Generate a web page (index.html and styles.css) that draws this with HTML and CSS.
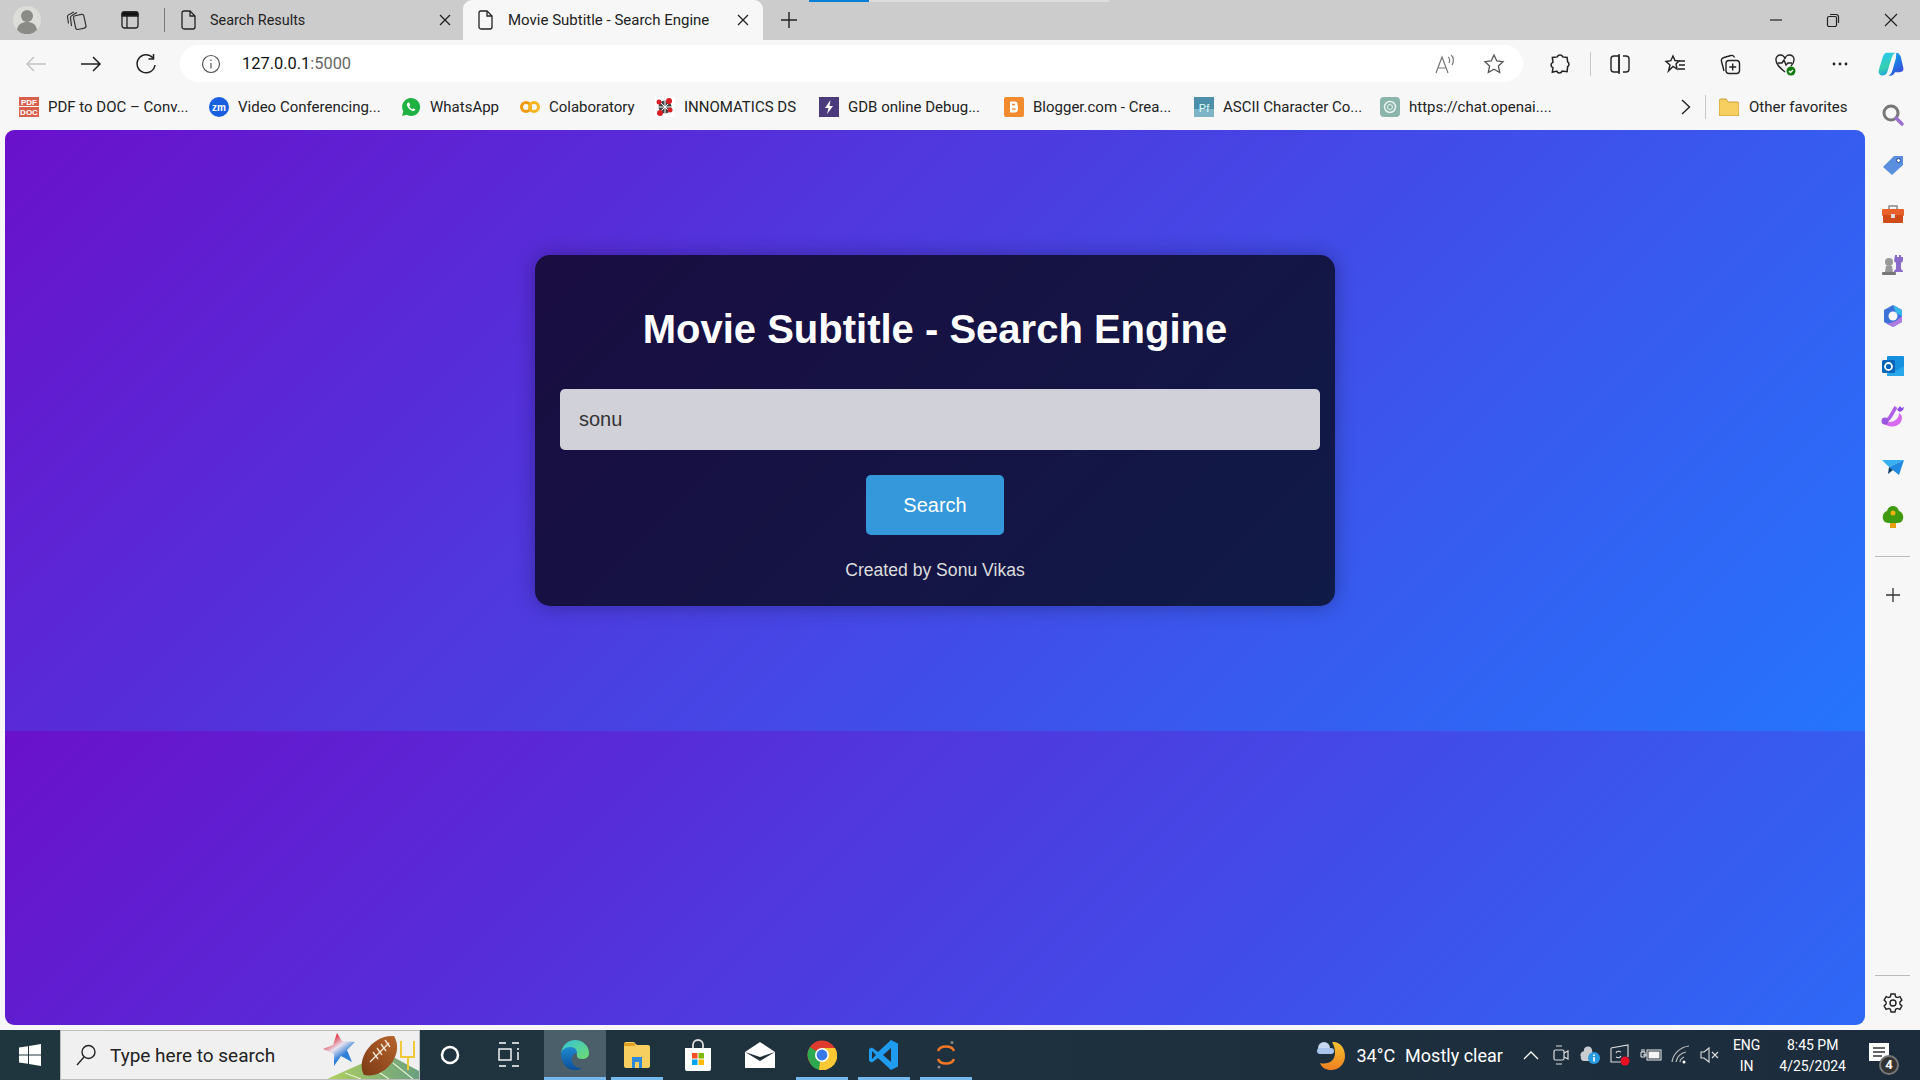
FILE: index.html
```html
<!DOCTYPE html>
<html lang="en">
<head>
    <meta charset="UTF-8">
    <meta name="viewport" content="width=device-width, initial-scale=1.0">
    <title>Movie Subtitle - Search Engine</title>
    <link rel="stylesheet" href="styles.css">
</head>
<body>
    <!-- Browser tab strip -->
    <div class="tab-strip">
        <div class="progress-line"><span></span></div>
        <div class="strip-btn profile">
            <svg width="28" height="28" viewBox="0 0 28 28"><circle cx="14" cy="14" r="14" fill="#dcdcd8"/><circle cx="14" cy="10" r="6" fill="#8a8a86"/><path d="M4 24c1-6 5-8 10-8s9 2 10 8a14 14 0 0 1-20 0z" fill="#8a8a86"/></svg>
        </div>
        <div class="strip-btn workspaces">
            <svg width="22" height="22" viewBox="0 0 22 22" fill="none" stroke="#333" stroke-width="1.200"><path d="M2.500 14.500L1.500 8c-.2-1 .3-1.800 1.200-2.200L8 3"/><path d="M5.500 17L4.500 9c-.2-1 .3-1.800 1.200-2.200L11 3.500"/><rect x="8.500" y="6" width="10.500" height="14" rx="2" transform="rotate(-12 13.500 13)"/></svg>
        </div>
        <div class="strip-btn vertical-tabs">
            <svg width="20" height="20" viewBox="0 0 20 20" fill="none" stroke="#222" stroke-width="1.300"><rect x="2" y="2" width="16" height="16" rx="2.500"/><path d="M2 3.500a1.500 1.500 0 0 1 1.500-1.500h13a1.500 1.500 0 0 1 1.500 1.500V6H2z" fill="#111"/><path d="M7 6v12"/></svg>
        </div>
        <div class="strip-sep"></div>
        <div class="tab">
            <svg class="doc-icon" width="17" height="20" viewBox="0 0 17 20" fill="none" stroke="#222" stroke-width="1.3"><path d="M2 3a2 2 0 0 1 2-2h6l5 5v11a2 2 0 0 1-2 2H4a2 2 0 0 1-2-2z"/><path d="M10 1v5h5"/></svg>
            <span class="tab-title">Search Results</span>
            <svg class="tab-close" width="12" height="12" viewBox="0 0 12 12" stroke="#222" stroke-width="1.300"><path d="M1 1l10 10M11 1L1 11"/></svg>
        </div>
        <div class="tab active">
            <svg class="doc-icon" width="17" height="20" viewBox="0 0 17 20" fill="none" stroke="#222" stroke-width="1.3"><path d="M2 3a2 2 0 0 1 2-2h6l5 5v11a2 2 0 0 1-2 2H4a2 2 0 0 1-2-2z"/><path d="M10 1v5h5"/></svg>
            <span class="tab-title">Movie Subtitle - Search Engine</span>
            <svg class="tab-close" width="12" height="12" viewBox="0 0 12 12" stroke="#222" stroke-width="1.300"><path d="M1 1l10 10M11 1L1 11"/></svg>
        </div>
        <div class="new-tab">
            <svg width="18" height="18" viewBox="0 0 18 18" stroke="#222" stroke-width="1.4"><path d="M9 1v16M1 9h16"/></svg>
        </div>
        <div class="window-controls">
            <svg width="12" height="12" viewBox="0 0 12 12" stroke="#222" stroke-width="1.2"><path d="M0 6h12"/></svg>
            <svg width="14" height="14" viewBox="0 0 14 14" fill="none" stroke="#222" stroke-width="1.2"><rect x="1.500" y="3.500" width="9" height="10" rx="1.500"/><path d="M4 1.500h6a2.500 2.500 0 0 1 2.500 2.500v6"/></svg>
            <svg width="14" height="14" viewBox="0 0 14 14" stroke="#222" stroke-width="1.2"><path d="M1 1l12 12M13 1L1 13"/></svg>
        </div>
    </div>

    <!-- Address bar row -->
    <div class="toolbar">
        <div class="nav-btn">
            <svg width="22" height="18" viewBox="0 0 22 18" fill="none" stroke="#c4c4c4" stroke-width="1.500"><path d="M21 9H2M9 2L2 9l7 7"/></svg>
        </div>
        <div class="nav-btn">
            <svg width="22" height="18" viewBox="0 0 22 18" fill="none" stroke="#222" stroke-width="1.500"><path d="M1 9h19M13 2l7 7-7 7"/></svg>
        </div>
        <div class="nav-btn">
            <svg width="22" height="22" viewBox="0 0 22 22" fill="none" stroke="#222" stroke-width="1.500"><path d="M18 5a9 9 0 1 0 2 7"/><path d="M18.500 1v5h-5"/></svg>
        </div>
        <div class="address-bar">
            <svg class="info-icon" width="20" height="20" viewBox="0 0 20 20" fill="none" stroke="#555" stroke-width="1.200"><circle cx="10" cy="10" r="8.500"/><path d="M10 9v5.500M10 5.500v1.500"/></svg>
            <span class="url">127.0.0.1<span class="url-port">:5000</span></span>
            <div class="address-actions">
                <svg width="24" height="24" viewBox="0 0 24 24" fill="none" stroke="#777" stroke-width="1.200"><path d="M3 21L9 5l6 16M5 16h8"/><path d="M15 5c2 1 2 4 1 6M18 3c3 2 3 7 1 10"/></svg>
                <svg width="24" height="24" viewBox="0 0 24 24" fill="none" stroke="#555" stroke-width="1.300"><path d="M12 3l2.800 6 6.200.7-4.600 4.300 1.300 6.500-5.700-3.200-5.700 3.200L7.600 14 3 9.700 9.200 9z"/></svg>
            </div>
        </div>
        <div class="toolbar-icons">
            <div class="tool-btn extensions">
                <svg width="24" height="24" viewBox="0 0 22 22" fill="none" stroke="#222" stroke-width="1.400"><path d="M8.500 4.500a2.700 2.700 0 0 1 5 0l4 .5.500 4a2.700 2.700 0 0 1 0 4.500l-.5 4.500-4.500-.5a2.700 2.700 0 0 1-5 0L4 18.500l.5-4a2.700 2.700 0 0 1 0-5L4 5z"/></svg>
            </div>
            <div class="toolbar-sep"></div>
            <div class="tool-btn">
                <svg width="22" height="22" viewBox="0 0 22 22" fill="none" stroke="#222" stroke-width="1.400"><path d="M10 3H5a3 3 0 0 0-3 3v10a3 3 0 0 0 3 3h5z"/><path d="M14 3h3a3 3 0 0 1 3 3v10a3 3 0 0 1-3 3h-3"/><path d="M10 1v20"/></svg>
            </div>
            <div class="tool-btn">
                <svg width="24" height="24" viewBox="0 0 24 24" fill="none" stroke="#222" stroke-width="1.400"><path d="M10 4l2 4.500 4 .5-3 3 1 5-4-2.500L5.500 19l1.500-6-4-3.500 4.800-.8z"/><path d="M16 9h6M16 13h6M15 17h7"/></svg>
            </div>
            <div class="tool-btn">
                <svg width="24" height="24" viewBox="0 0 24 24" fill="none" stroke="#222" stroke-width="1.400"><path d="M6 19L3.500 9.500C3 7.500 4 6 6 5.500L13 3.500c1.500-.4 3 .3 3.500 2"/><rect x="8" y="8.500" width="13.500" height="13" rx="3"/><path d="M14.700 11.500v7M11.200 15h7"/></svg>
            </div>
            <div class="tool-btn">
                <svg width="24" height="24" viewBox="0 0 24 24" fill="none" stroke="#222" stroke-width="1.400"><path d="M12 20C6 15 3 12 3 8a4.500 4.500 0 0 1 9-1 4.500 4.500 0 0 1 9 1c0 2-1 4-3 6"/><path d="M5 11h4l2-3 2 5 2-2h4"/><circle cx="18" cy="19" r="4.500" fill="#107c10" stroke="none"/><path d="M16 19l1.500 1.500L20 18" stroke="#fff"/></svg>
            </div>
            <div class="tool-btn">
                <svg width="16" height="4" viewBox="0 0 16 4" fill="#222"><circle cx="2" cy="2" r="1.400"/><circle cx="8" cy="2" r="1.400"/><circle cx="14" cy="2" r="1.400"/></svg>
            </div>
            <div class="tool-btn copilot">
                <svg width="26" height="28" viewBox="0 0 32 32"><defs><linearGradient id="cp1" x1="0" y1="0" x2="0.600" y2="1"><stop offset="0" stop-color="#1fb6ea"/><stop offset="0.500" stop-color="#1a7fe8"/><stop offset="1" stop-color="#3a4fd8"/></linearGradient><linearGradient id="cp2" x1="0.300" y1="0" x2="0.600" y2="1"><stop offset="0" stop-color="#27c8f0"/><stop offset="0.600" stop-color="#35d0b0"/><stop offset="1" stop-color="#1f9ae8"/></linearGradient></defs><path d="M11 2h11c-3 1-4 3-5 6l-5 16c-1 4-3 6-6 6H5c-3 0-5-3-4-7l5-16c1-3 3-5 5-5z" fill="url(#cp2)"/><path d="M22 2c3 0 5 2 6 5l3 13c1 4-1 6-5 6h-5c-2 4-5 5-8 4 3-1 4-4 5-7l4-14c0-3 1-5 0-7z" fill="url(#cp1)"/></svg>
            </div>
        </div>
    </div>

    <!-- Favorites bar -->
    <div class="bookmarks">
        <div class="bookmark-list">
            <div class="bookmark">
                <svg width="20" height="20" viewBox="0 0 20 20"><rect width="20" height="20" fill="#d8604c"/><path d="M0 9.500h20" stroke="#fff"/><text x="10" y="8" class="tiny-label">PDF</text><text x="10" y="18" class="tiny-label">DOC</text></svg>
                <span>PDF to DOC – Conv...</span>
            </div>
            <div class="bookmark">
                <svg width="20" height="20" viewBox="0 0 20 20"><circle cx="10" cy="10" r="10" fill="#1a5fe0"/><text x="10" y="13.500" class="zm-label">zm</text></svg>
                <span>Video Conferencing...</span>
            </div>
            <div class="bookmark">
                <svg width="20" height="20" viewBox="0 0 20 20"><path d="M10 1a9 9 0 0 0-7.700 13.500L1 19l4.600-1.200A9 9 0 1 0 10 1z" fill="#1fb141"/><path d="M7 5.500c-1 .5-1.500 2-.8 3.500 1 2.200 2.800 4 5 4.800 1.500.5 2.800 0 3.300-1.200l-2.200-1.400-1 1c-1.300-.5-2.400-1.700-3-3l1-1L8.200 5.500z" fill="#fff"/></svg>
                <span>WhatsApp</span>
            </div>
            <div class="bookmark">
                <svg width="20" height="20" viewBox="0 0 20 20" fill="none" stroke-width="3"><circle cx="6" cy="10" r="4.500" stroke="#f29a0e"/><circle cx="14" cy="10" r="4.500" stroke="#f6b51e"/></svg>
                <span>Colaboratory</span>
            </div>
            <div class="bookmark">
                <svg width="20" height="20" viewBox="0 0 20 20"><rect width="20" height="20" fill="#fff"/><circle cx="10" cy="10" r="6.500" fill="#444"/><path d="M10 3v14M3 10h14M5 5l10 10M15 5L5 15" stroke="#fff"/><circle cx="14" cy="4" r="3" fill="#d81f26"/><circle cx="4" cy="5" r="2.500" fill="#d81f26"/><circle cx="15" cy="13" r="2.500" fill="#d81f26"/><circle cx="5" cy="16" r="3" fill="#d81f26"/></svg>
                <span>INNOMATICS DS</span>
            </div>
            <div class="bookmark">
                <svg width="20" height="20" viewBox="0 0 20 20"><rect width="20" height="20" fill="#4b3a7c"/><path d="M11.500 3L6 11h3.500L8 17l6-8h-3.500z" fill="#fff"/></svg>
                <span>GDB online Debug...</span>
            </div>
            <div class="bookmark">
                <svg width="20" height="20" viewBox="0 0 20 20"><rect width="20" height="20" rx="2" fill="#f28b30"/><path d="M6 4.500h5a2.500 2.500 0 0 1 2.500 2.500v1.500l.5.500v3a3.500 3.500 0 0 1-3.500 3.500H6z" fill="#fff"/><path d="M8 7.500h3M8 12h3.500" stroke="#f28b30" stroke-width="1.500"/></svg>
                <span>Blogger.com - Crea...</span>
            </div>
            <div class="bookmark">
                <svg width="20" height="20" viewBox="0 0 20 20"><rect width="20" height="20" fill="#4d8fa8"/><rect y="12" width="20" height="8" fill="#7fb4c6"/><text x="10" y="14.500" class="pf-label">Pf</text></svg>
                <span>ASCII Character Co...</span>
            </div>
            <div class="bookmark">
                <svg width="20" height="20" viewBox="0 0 20 20" fill="none"><rect width="20" height="20" rx="4" fill="#8bb5ab"/><circle cx="10" cy="10" r="5.500" stroke="#e8f2ef" stroke-width="1.500"/><circle cx="10" cy="10" r="2.500" stroke="#e8f2ef"/></svg>
                <span>https://chat.openai....</span>
            </div>
        </div>
        <div class="bookmark-more">
            <svg width="10" height="16" viewBox="0 0 10 16" fill="none" stroke="#222" stroke-width="1.400"><path d="M1 1l7.500 7L1 15"/></svg>
        </div>
        <div class="toolbar-sep"></div>
        <div class="bookmark other-favs">
            <svg width="20" height="18" viewBox="0 0 20 18"><path d="M0 3a2 2 0 0 1 2-2h5l2 3h9a2 2 0 0 1 2 2v10a2 2 0 0 1-2 2H2a2 2 0 0 1-2-2z" fill="#f6cf60" stroke="#c9a030"/></svg>
            <span>Other favorites</span>
        </div>
    </div>

    <div class="browser-main">
        <!-- The actual page -->
        <main class="page">
            <div class="search-card">
                <h1>Movie Subtitle - Search Engine</h1>
                <form class="search-form">
                    <input type="text" class="search-input" value="sonu">
                    <button type="button" class="search-button">Search</button>
                </form>
                <p class="credit">Created by Sonu Vikas</p>
            </div>
        </main>

        <!-- Edge sidebar -->
        <aside class="sidebar">
            <div class="side-icon">
                <svg width="24" height="24" viewBox="0 0 24 24" fill="none"><circle cx="10" cy="10" r="7" stroke="#777" stroke-width="3"/><path d="M15 15l6 6" stroke="#9a6fd0" stroke-width="3.500" stroke-linecap="round"/></svg>
            </div>
            <div class="side-icon">
                <svg width="24" height="24" viewBox="0 0 24 24"><path d="M13 3h9v9L11 22l-9-8z" fill="#5a8fe0"/><circle cx="17.500" cy="7.500" r="2" fill="#fff" stroke="#2a4fa0"/></svg>
            </div>
            <div class="side-icon">
                <svg width="24" height="24" viewBox="0 0 24 24"><path d="M8 7V3h8v4" fill="none" stroke="#888" stroke-width="1.500"/><rect x="1" y="6" width="22" height="7" rx="1" fill="#e8602c"/><rect x="2" y="12" width="20" height="8" rx="1" fill="#d04a1a"/><rect x="10" y="11" width="4" height="4" fill="#ddd"/></svg>
            </div>
            <div class="side-icon">
                <svg width="24" height="24" viewBox="0 0 24 24"><path d="M14 2h2v2h2V2h2v2h2V2h0v6l-2 2v6l2 2v1H13v-1l2-2v-6l-2-2z" fill="#8a6cc8"/><circle cx="8" cy="9" r="4" fill="#999"/><path d="M5 13h6l1 6H4z" fill="#999"/><rect x="1" y="19" width="14" height="3" rx="1" fill="#777"/></svg>
            </div>
            <div class="side-icon">
                <svg width="24" height="24" viewBox="0 0 24 24" fill="none"><path d="M12 1l9 5v12l-9 5-9-5V6z" fill="#3d72d8"/><path d="M12 1l9 5v6l-6-3z" fill="#36b8e8"/><path d="M21 12v6l-9 5-6-3 9-3z" fill="#b07ae0"/><circle cx="12" cy="12" r="4.500" fill="#f7f7f7"/></svg>
            </div>
            <div class="side-icon">
                <svg width="24" height="24" viewBox="0 0 24 24"><rect x="6" y="2" width="17" height="20" rx="1" fill="#1490df"/><path d="M6 12l8.500 5L23 12v10H6z" fill="#28a8ea"/><rect x="1" y="6" width="13" height="13" rx="1.500" fill="#0364b8"/><circle cx="7.500" cy="12.500" r="3.500" fill="none" stroke="#fff" stroke-width="1.800"/></svg>
            </div>
            <div class="side-icon">
                <svg width="24" height="24" viewBox="0 0 24 24" fill="none"><path d="M6 16c3-1 5-7 9-13" stroke="#b060e8" stroke-width="3.500"/><path d="M3 20c5 4 17 4 18-6 0-2-1-4-3-5 0 6-5 9-10 9z" fill="#d86af0"/><circle cx="4" cy="17" r="3.500" fill="#9a5ae0"/><path d="M16 6l3-4 1.500 2L23 3l-1 3-3 2z" fill="#8a4ae8"/></svg>
            </div>
            <div class="side-icon">
                <svg width="24" height="24" viewBox="0 0 24 24"><path d="M1 6h22L8 13z" fill="#38b0f0"/><path d="M23 6l-5 15-10-8z" fill="#1f8ae0"/><path d="M8 13l-1 7 5-4z" fill="#10406a"/></svg>
            </div>
            <div class="side-icon">
                <svg width="24" height="24" viewBox="0 0 24 24"><rect x="9" y="16" width="6" height="7" fill="#e8a010"/><path d="M12 1c3 0 5 2 6 5 3 1 5 4 4 8-1 3-3 4-6 4H8c-3 0-5-1-6-4-1-4 1-7 4-8 1-3 3-5 6-5z" fill="#3f9a10"/><circle cx="12" cy="8" r="2.500" fill="#f0b010"/></svg>
            </div>
            <div class="side-sep"></div>
            <div class="side-icon">
                <svg width="18" height="18" viewBox="0 0 18 18" stroke="#333" stroke-width="1.300"><path d="M9 2v14M2 9h14"/></svg>
            </div>
            <div class="side-sep bottom"></div>
            <div class="side-icon">
                <svg width="22" height="22" viewBox="0 0 22 22" fill="none" stroke="#222" stroke-width="1.400"><circle cx="11" cy="11" r="3"/><path d="M9 2h4l.6 2.700 1.700.9 2.600-.9 2 3.400-2 1.900v2l2 1.900-2 3.400-2.600-.9-1.700.9L13 20H9l-.6-2.700-1.700-.9-2.600.9-2-3.400 2-1.900v-2l-2-1.900 2-3.400 2.600.9 1.700-.9z"/></svg>
            </div>
        </aside>
    </div>

    <!-- Windows taskbar -->
    <footer class="taskbar">
        <div class="start-btn">
            <svg width="22" height="22" viewBox="0 0 22 22" fill="#fff"><path d="M0 3.500l9-1.300v8.300H0zM10 2l12-2v10.500H10zM0 11.500h9v8.300l-9-1.300zM10 11.500h12V22l-12-2z"/></svg>
        </div>
        <div class="task-search">
            <svg width="24" height="24" viewBox="0 0 24 24" fill="none" stroke="#222" stroke-width="1.400"><circle cx="14.500" cy="9" r="6.500"/><path d="M10 14l-7 8"/></svg>
            <span class="task-search-text">Type here to search</span>
            <svg class="search-art" width="96" height="50" viewBox="0 0 96 50">
                <defs>
                    <linearGradient id="field" x1="0" y1="0" x2="1" y2="0"><stop offset="0" stop-color="#b0d060"/><stop offset="1" stop-color="#6aa080"/></linearGradient>
                    <linearGradient id="star" x1="0" y1="0" x2="0.700" y2="1"><stop offset="0.250" stop-color="#e23a48"/><stop offset="0.500" stop-color="#e8e4f0"/><stop offset="0.750" stop-color="#2f7ed8"/></linearGradient>
                    <linearGradient id="ball" x1="1" y1="0" x2="0" y2="1"><stop offset="0" stop-color="#b8642c"/><stop offset="1" stop-color="#7a3a16"/></linearGradient>
                </defs>
                <path d="M4 50l36-16c16-7 26-7 32-5l24 13v8z" fill="url(#field)"/>
                <path d="M22 44l16 6M48 38l18 12M70 34l20 16" stroke="#e6f0d4" stroke-width="1.200"/>
                <path d="M14 4l5 8 13 1-8 8 5 12-11-6-7 10V25L0 20l10-4z" fill="url(#star)"/>
                <path d="M71 7c11 18-9 43-30 39C32 30 50 5 71 7z" fill="url(#ball)"/>
                <path d="M66 14L47 33M62 11l5 7M58 15l5 7M54 19l5 7M50 23l5 7" stroke="#f2e6d4" stroke-width="1.300"/>
                <path d="M78 12v16h13V12M85 28v13" fill="none" stroke="#f0c93a" stroke-width="2"/>
            </svg>
        </div>
        <div class="task-icon cortana">
            <svg width="24" height="24" viewBox="0 0 24 24" fill="none" stroke="#fff" stroke-width="2.500"><circle cx="12" cy="12" r="8"/></svg>
        </div>
        <div class="task-icon task-view">
            <svg width="22" height="26" viewBox="0 0 22 26" fill="none" stroke="#fff" stroke-width="1.400"><path d="M1 1h7M1 24h7M14 1h7M14 24h7"/><rect x="1" y="7" width="12" height="11"/><path d="M19 7h2M20 10v8"/></svg>
        </div>
        <div class="task-icon running current">
            <svg width="32" height="32" viewBox="0 0 32 32"><defs><linearGradient id="eg1" x1="0" y1="0" x2="1" y2="1"><stop offset="0" stop-color="#35c3d8"/><stop offset="1" stop-color="#6fdc70"/></linearGradient><linearGradient id="eg2" x1="0" y1="0" x2="0" y2="1"><stop offset="0" stop-color="#1f8ad0"/><stop offset="1" stop-color="#0b4f9a"/></linearGradient></defs><path d="M2 15C3 6 9 1 16 1c8 0 14 6 14 13 0 4-3 6-7 6-3 0-5-1-5-3 0-6-4-8-8-7-4 1-7 3-8 5z" fill="url(#eg1)"/><path d="M2 15c0-4 5-7 9-7 4 0 7 2 7 6-3 0-6 3-5 8 1 5 6 8 11 7-3 2-6 2-9 2C8 31 2 24 2 15z" fill="url(#eg2)"/></svg>
        </div>
        <div class="task-icon running explorer">
            <svg width="30" height="30" viewBox="0 0 30 30"><path d="M2 4a2 2 0 0 1 2-2h8l3 3h11a2 2 0 0 1 2 2v19a2 2 0 0 1-2 2H4a2 2 0 0 1-2-2z" fill="#f6cf60"/><path d="M2 3h11v3H2z" fill="#e0a020"/><path d="M10 28V17h10v11h-3v-6h-4v6z" fill="#2e8ad8"/></svg>
        </div>
        <div class="task-icon">
            <svg width="30" height="32" viewBox="0 0 30 32"><path d="M10 9V6a5 5 0 0 1 10 0v3" fill="none" stroke="#ddd" stroke-width="1.800"/><path d="M2 9h26v21a2 2 0 0 1-2 2H4a2 2 0 0 1-2-2z" fill="#fff"/><rect x="9" y="14" width="5.500" height="5.500" fill="#f25022"/><rect x="15.500" y="14" width="5.500" height="5.500" fill="#7fba00"/><rect x="9" y="20.500" width="5.500" height="5.500" fill="#00a4ef"/><rect x="15.500" y="20.500" width="5.500" height="5.500" fill="#ffb900"/></svg>
        </div>
        <div class="task-icon">
            <svg width="30" height="26" viewBox="0 0 30 26"><path d="M0 10L15 0l15 10v16H0z" fill="#fff"/><path d="M0 10l15 9 15-9-15 5z" fill="#1f2f3a"/></svg>
        </div>
        <div class="task-icon running">
            <svg width="30" height="30" viewBox="0 0 30 30"><circle cx="15" cy="15" r="14.500" fill="#de3b2e"/><path d="M15 15L2.500 22A14.500 14.500 0 0 1 3 7z" fill="#2da94f"/><path d="M15 15l-3 15a14.500 14.500 0 0 1-9.500-8z" fill="#2da94f"/><path d="M15 8h13a14.500 14.500 0 0 1-16 21.700z" fill="#fcc934"/><circle cx="15" cy="15" r="7" fill="#fff"/><circle cx="15" cy="15" r="5.400" fill="#3b78e7"/></svg>
        </div>
        <div class="task-icon running">
            <svg width="30" height="30" viewBox="0 0 30 30"><path d="M22 0l7 3.500v23L22 30 9 18l-6 4.500L0 21V9l3-1.500L9 12z" fill="#1f9cf0"/><path d="M22 8l-8 7 8 7z" fill="#1f2f3a"/><path d="M3 11v8l4-4z" fill="#1f2f3a"/></svg>
        </div>
        <div class="task-icon running">
            <svg width="24" height="30" viewBox="0 0 24 30" fill="none"><path d="M4 11C6 5 18 5 20 11" stroke="#f37626" stroke-width="2.400"/><path d="M4 19c2 6 14 6 16 0" stroke="#f37626" stroke-width="2.400"/><circle cx="18" cy="2.500" r="1.500" fill="#888"/><circle cx="5" cy="27" r="1.500" fill="#888"/></svg>
        </div>

        <div class="tray">
            <div class="weather">
                <svg width="30" height="32" viewBox="0 0 30 32"><defs><linearGradient id="moon" x1="0" y1="0" x2="0" y2="1"><stop offset="0" stop-color="#f6c230"/><stop offset="1" stop-color="#ee7f20"/></linearGradient></defs><path d="M16 3c8-1 13 6 13 14 0 8-6 14-14 14-5 0-9-2-11-7 8 2 15-2 15-10 0-4-1-8-3-11z" fill="url(#moon)"/><circle cx="8" cy="9" r="6" fill="#c8d8f0"/><rect x="1" y="9" width="17" height="6" rx="3" fill="#a8c4ec"/></svg>
                <span>34°C</span>
                <span class="weather-text">Mostly clear</span>
            </div>
            <svg class="tray-chevron" width="16" height="10" viewBox="0 0 16 10" fill="none" stroke="#fff" stroke-width="1.300"><path d="M1 9l7-7 7 7"/></svg>
            <div class="tray-icons">
                <svg width="20" height="22" viewBox="0 0 20 22" fill="none" stroke="#ddd" stroke-width="1.200"><rect x="3" y="6" width="10" height="10" rx="1.500"/><path d="M13 9l4-2v8l-4-2M5 2h6M5 20h6"/></svg>
                <svg width="20" height="22" viewBox="0 0 20 22"><path d="M1 13a4 4 0 0 1 3-6 4 4 0 0 1 8-1l1 6-3 5H4a3 3 0 0 1-3-4z" fill="#c8ccd0"/><circle cx="14" cy="14" r="6" fill="#2a9ae0"/><path d="M14 13v4.500M14 10.500v1.500" stroke="#fff" stroke-width="1.600"/></svg>
                <svg width="22" height="24" viewBox="0 0 22 24" fill="none" stroke="#ddd" stroke-width="1.100"><path d="M2 5l17-3v12M2 5v14h10"/><path d="M7 10c1-2 3-2 5-1M12 13c-1 2-3 2-5 1"/><circle cx="16" cy="18" r="4.500" fill="#e81123" stroke="none"/></svg>
                <svg width="22" height="18" viewBox="0 0 22 18" fill="none"><rect x="7" y="4" width="14" height="10" stroke="#eee" fill="#1f2f3a"/><rect x="8.500" y="5.500" width="11" height="7" fill="#f4f4f4"/><path d="M7 9H3M1 6h4v5H1zM2 6V3M4 6V3" stroke="#eee"/></svg>
                <svg width="20" height="20" viewBox="0 0 20 20" fill="none" stroke="#bbb" stroke-width="1.200"><path d="M1 17C2 9 9 2 18 1M5 17c1-5 5-9 10-10M9 17c0-2 2-4 4-5"/><circle cx="13" cy="17" r="1.500" fill="#fff" stroke="none"/></svg>
                <svg width="20" height="20" viewBox="0 0 20 20" fill="none" stroke="#ddd" stroke-width="1.100"><path d="M1 7v6h3l5 4V3L4 7zM12 7l6 6M18 7l-6 6"/></svg>
            </div>
            <div class="lang"><span>ENG</span><span>IN</span></div>
            <div class="clock"><span>8:45 PM</span><span>4/25/2024</span></div>
            <div class="notify">
                <svg width="20" height="18" viewBox="0 0 20 18"><path d="M0 0h20v18H0z" fill="#fff"/><path d="M4 5h12M4 9h12M4 13h9" stroke="#333" stroke-width="1.500"/></svg>
                <span class="notify-badge">4</span>
            </div>
        </div>
    </footer>
</body>
</html>
```

FILE: styles.css
```css
* {
    box-sizing: border-box;
}

html, body {
    height: 100%;
}

body {
    margin: 0;
    overflow: hidden;
    background-color: #f7f7f7;
    font-family: Roboto, "Liberation Sans", sans-serif;
    color: #222;
    display: flex;
    flex-direction: column;
}

svg {
    flex-shrink: 0;
    display: block;
}

/* tab strip */
.tab-strip {
    height: 40px;
    background-color: #cccccc;
    display: flex;
    align-items: center;
    position: relative;
}

.progress-line {
    position: absolute;
    left: 809px;
    top: 0;
    width: 300px;
    height: 2px;
    background-color: #dddddd;
}

.progress-line span {
    display: block;
    width: 60px;
    height: 2px;
    background-color: #0a7fd6;
}

.strip-btn {
    display: flex;
    align-items: center;
    justify-content: center;
}

.profile {
    width: 54px;
}

.workspaces {
    width: 46px;
}

.vertical-tabs {
    width: 60px;
}

.strip-sep {
    width: 1px;
    height: 24px;
    background-color: #777;
    margin: 0 5px 0 4px;
}

.tab {
    width: 293px;
    height: 40px;
    padding: 0 12px 0 10px;
    display: flex;
    align-items: center;
    font-size: 14.400px;
}

.tab.active {
    width: 300px;
    padding: 0 14px;
    background-color: #f7f7f7;
    border-radius: 9px 9px 0 0;
    font-size: 15px;
}

.tab-title {
    margin-left: 13px;
    white-space: nowrap;
}

.tab.active .tab-title {
    margin-left: 14px;
}

.tab-close {
    margin-left: auto;
}

.new-tab {
    width: 52px;
    display: flex;
    justify-content: center;
}

.window-controls {
    margin-left: auto;
    width: 150px;
    padding-right: 22px;
    display: flex;
    justify-content: space-between;
    align-items: center;
}

/* toolbar */
.toolbar {
    height: 50px;
    padding: 5px 0 8px 8px;
    display: flex;
    align-items: center;
}

.nav-btn {
    width: 55px;
    display: flex;
    justify-content: center;
}

.address-bar {
    width: 1343px;
    height: 37px;
    margin-left: 7px;
    padding: 0 17px 0 21px;
    background-color: #fff;
    border-radius: 19px;
    display: flex;
    align-items: center;
}

.url {
    margin-left: 21px;
    font-size: 16.400px;
    color: #111;
}

.url-port {
    color: #666;
}

.address-actions {
    margin-left: auto;
    display: flex;
    gap: 25px;
    align-items: center;
}

.toolbar-icons {
    margin-left: 16px;
    flex: 1;
    display: flex;
    align-items: center;
}

.tool-btn {
    width: 55px;
    display: flex;
    justify-content: center;
}

.tool-btn.extensions {
    width: 41px;
    margin-right: 10px;
}

.tool-btn.copilot {
    margin-left: -4px;
}

.toolbar-sep {
    width: 1px;
    height: 24px;
    background-color: #c8c8c8;
}

.toolbar-icons .toolbar-sep {
    margin-right: 1px;
}

/* favorites */
.bookmarks {
    height: 40px;
    padding: 0 0 6px 19px;
    display: flex;
    align-items: center;
}

.bookmark-list {
    display: grid;
    grid-template-columns: 190px 192px 119px 135px 164px 185px 190px 186px 281px;
    align-items: center;
}

.bookmark {
    display: flex;
    align-items: center;
    gap: 9px;
    font-size: 15px;
    white-space: nowrap;
}

.tiny-label {
    font-family: "Liberation Sans", sans-serif;
    font-size: 8px;
    font-weight: bold;
    fill: #fff;
    text-anchor: middle;
}

.zm-label {
    font-family: "Liberation Sans", sans-serif;
    font-size: 10px;
    font-weight: bold;
    fill: #fff;
    text-anchor: middle;
}

.pf-label {
    font-family: "Liberation Sans", sans-serif;
    font-size: 11px;
    fill: #dff;
    text-anchor: middle;
}

.bookmark-more {
    width: 38px;
    margin-left: 6px;
    display: flex;
    justify-content: center;
}

.other-favs {
    margin-left: 13px;
    gap: 10px;
}

/* page area */
.browser-main {
    flex: 1;
    min-height: 0;
    display: flex;
    padding-left: 5px;
}

.page {
    width: 1860px;
    height: 895px;
    border-radius: 9px;
    overflow: hidden;
    background-image: linear-gradient(135deg, #6a11cb, #2575fc);
    background-size: 100% 601px;
    padding-top: 125px;
    font-family: "Liberation Sans", Arial, sans-serif;
}

.search-card {
    width: 800px;
    height: 351px;
    margin: 0 auto;
    padding: 25px;
    background-color: rgba(0, 0, 0, 0.7);
    border-radius: 15px;
    box-shadow: 0 0 20px rgba(0, 0, 0, 0.3);
    text-align: center;
}

.search-card h1 {
    margin: 26px 0 37px;
    font-size: 40px;
    line-height: 46px;
    color: #fff;
}

.search-input {
    display: block;
    width: 760px;
    height: 61px;
    padding: 0 19px;
    border: none;
    border-radius: 5px;
    background-color: #d1d1da;
    color: #333;
    font-family: inherit;
    font-size: 20px;
}

.search-button {
    display: block;
    width: 138px;
    height: 60px;
    margin: 25px auto 0;
    border: none;
    border-radius: 5px;
    background-color: #3498db;
    color: #fff;
    font-family: inherit;
    font-size: 20px;
}

.credit {
    margin: 25px 0 0;
    font-size: 17.600px;
    line-height: 21px;
    color: #ddd;
}

/* sidebar */
.sidebar {
    flex: 1;
    height: 898px;
    display: flex;
    flex-direction: column;
    align-items: center;
}

.side-icon {
    height: 50.25px;
    display: flex;
    align-items: center;
    justify-content: center;
    flex-shrink: 0;
}

.sidebar .side-icon:first-child {
    margin-top: -40.500px;
}

.side-sep {
    width: 35px;
    height: 1px;
    margin: 14px 0 13px;
    background-color: #bbb;
    flex-shrink: 0;
}

.side-sep.bottom {
    margin: auto 0 2px;
}

/* taskbar */
.taskbar {
    height: 50px;
    background-image: linear-gradient(90deg, #20363f, #1c2c3d);
    display: flex;
    align-items: center;
    color: #fff;
}

.start-btn {
    width: 60px;
    display: flex;
    justify-content: center;
}

.task-search {
    width: 360px;
    height: 50px;
    padding-left: 13px;
    background-color: #f0f0f0;
    border: 1px solid #bdbdbd;
    display: flex;
    align-items: center;
    position: relative;
    color: #222;
}

.task-search-text {
    margin-left: 12px;
    font-size: 19px;
}

.search-art {
    position: absolute;
    right: 0;
    bottom: 0;
}

.task-icon {
    width: 61.800px;
    height: 50px;
    display: flex;
    align-items: center;
    justify-content: center;
    position: relative;
}

.task-icon.cortana {
    width: 60px;
}

.task-icon.task-view {
    width: 64px;
    padding-right: 6px;
}

.task-icon.running::after {
    content: "";
    position: absolute;
    left: 5px;
    right: 5px;
    bottom: 0;
    height: 3px;
    background-color: #76b9ed;
}

.task-icon.current {
    background-color: #4b5f6b;
}

.task-icon.current::after {
    left: 0;
    right: 0;
}

.tray {
    margin-left: auto;
    display: flex;
    align-items: center;
    height: 50px;
}

.weather {
    display: flex;
    align-items: center;
    gap: 10px;
    font-size: 18px;
}

.tray-chevron {
    margin-left: 20px;
}

.tray-icons {
    margin-left: 12px;
    display: flex;
    align-items: center;
    gap: 9px;
}

.lang {
    margin-left: 13px;
    display: flex;
    flex-direction: column;
    align-items: center;
    gap: 5px;
    font-size: 14px;
}

.clock {
    margin-left: 19px;
    display: flex;
    flex-direction: column;
    align-items: center;
    gap: 5px;
    font-size: 14px;
}

.notify {
    width: 60px;
    height: 50px;
    margin-left: 14px;
    padding: 0 22px 6px 0;
    display: flex;
    align-items: center;
    justify-content: center;
    position: relative;
}

.notify-badge {
    position: absolute;
    left: 19px;
    top: 25px;
    width: 20px;
    height: 20px;
    border-radius: 50%;
    border: 2px solid #777;
    background-color: #333;
    font-size: 13px;
    font-weight: bold;
    text-align: center;
    line-height: 16px;
}
```
